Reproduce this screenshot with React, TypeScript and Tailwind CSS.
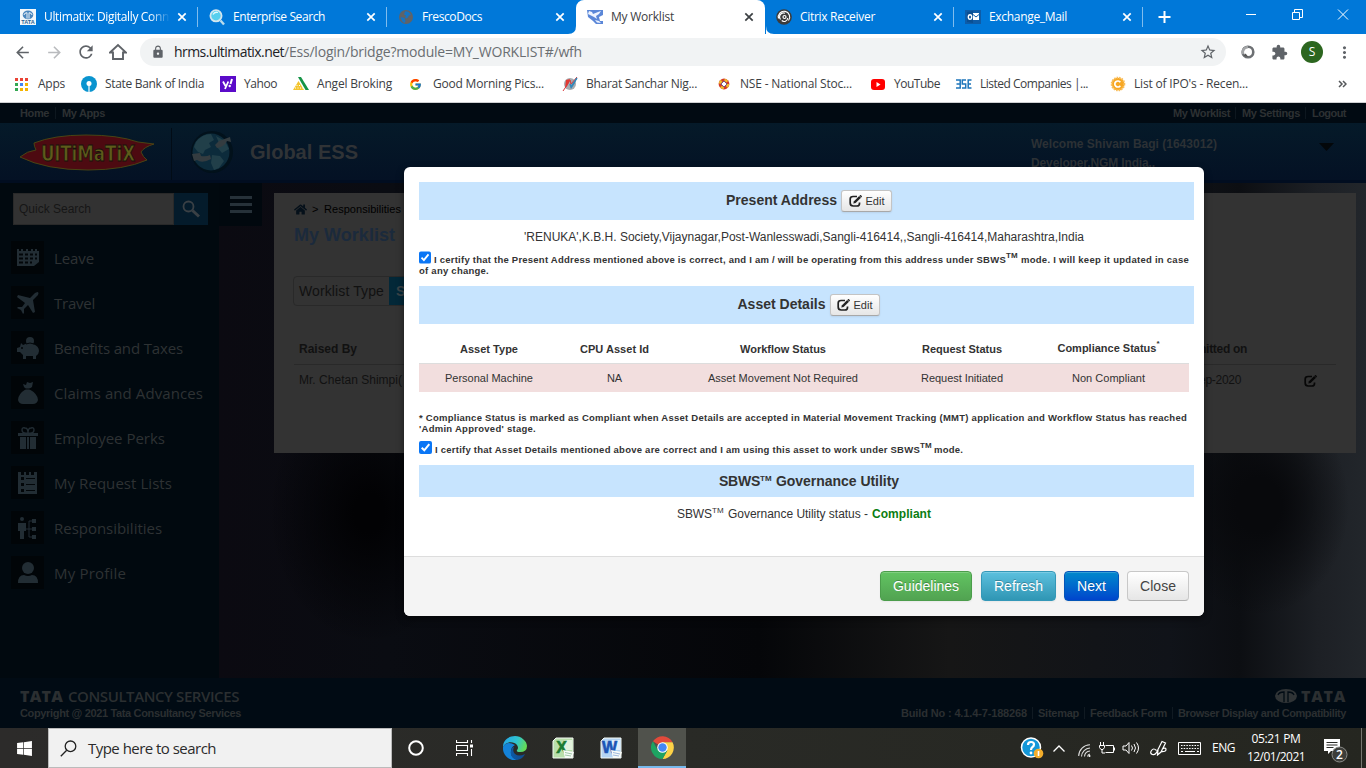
import { useLayoutEffect, useRef, useState, type ReactNode } from "react";
import { MdArrowBack, MdArrowForward, MdRefresh, MdLock, MdStarBorder, MdExtension, MdMoreVert } from "react-icons/md";
import { FcGoogle } from "react-icons/fc";
import { FaWindows, FaHome } from "react-icons/fa";

/* Text run tracked so that it fills the given width. */
function Txt({ w, children, className = "" }: { w: number; children: string; className?: string }) {
  const ref = useRef<HTMLSpanElement>(null);
  const [spacing, setSpacing] = useState(0);
  useLayoutEffect(() => {
    if (ref.current) {
      const natural = ref.current.getBoundingClientRect().width - spacing * children.length;
      setSpacing((w - natural) / children.length);
    }
  }, [w, children]);
  return (
    <span ref={ref} className={`inline-block shrink-0 whitespace-pre ${className}`} style={{ letterSpacing: spacing }}>
      {children}
    </span>
  );
}

const segoe = "font-['Open_Sans','Noto_Sans',sans-serif]";

/* ---------- favicons ---------- */
const TataIcon = () => (
  <svg width="16" height="16" viewBox="0 0 16 16">
    <rect width="16" height="16" fill="#f4f8fb" />
    <ellipse cx="8" cy="5.8" rx="5.3" ry="4.4" fill="#4a86bd" />
    <path d="M4 6q0-2 3-2.300v6M12 6q0-2-3-2.300v6" stroke="#fff" strokeWidth=".9" fill="none" />
    <text x="8" y="15" textAnchor="middle" fontSize="5.500" fontWeight="700" fill="#2a6295" className="font-['Liberation_Sans',sans-serif]">TATA</text>
  </svg>
);
const SearchFav = () => (
  <svg width="17" height="17" viewBox="0 0 17 17">
    <circle cx="7" cy="6.800" r="5.600" fill="#57cfee" stroke="#d3e6ee" strokeWidth="1.800" />
    <path d="M4 5.500q1.500-3 5-2" stroke="#dffbff" fill="none" strokeWidth="1.300" />
    <path d="M11.500 11.500l3.500 4" stroke="#b9dcec" strokeWidth="2.400" />
  </svg>
);
const GlobeFav = () => (
  <svg width="16" height="16" viewBox="0 0 16 16">
    <circle cx="8" cy="8" r="7" fill="#5f6368" />
    <path d="M7 2.500q3-1 6 3l-2 1-2 3-2-1 1-2-2-1zM2.500 8l4 1 1 3-1 2q-3-1-4-6z" fill="#1674c4" />
  </svg>
);
const WorklistFav = () => (
  <svg width="16" height="16" viewBox="0 0 16 16">
    <path d="M0 1h16v5l-4 2 1 4h3v3H9l-3-3-5-4z" fill="#5b87d8" />
    <path d="M2 2l3 1 1 2 5-2 3-1-2 3-3 2 1 3-3-2-2-1-4-2zM8 11l4 1 2 2-4-.5z" fill="#eef4ff" />
  </svg>
);
const CitrixFav = () => (
  <svg width="16" height="16" viewBox="0 0 16 16">
    <circle cx="8" cy="8" r="7.800" fill="#3b3b3b" />
    <circle cx="8.500" cy="8" r="1.500" fill="none" stroke="#fff" strokeWidth="1.200" />
    <path d="M2.500 9.500A5.700 5.700 0 1 1 12.500 11.500M4.500 10.500A4 4 0 0 1 9 4.200M11.700 9a3.600 3.600 0 0 1-6 2.500" fill="none" stroke="#fff" strokeWidth="1.100" />
  </svg>
);
const OutlookFav = () => (
  <svg width="16" height="16" viewBox="0 0 16 16">
    <path d="M0 1h16v14H0z" fill="#0d5ca8" />
    <path d="M8 4h6v7H8z" fill="#fff" />
    <path d="M8 5.500l3 2.500 3-2.500" stroke="#0d5ca8" fill="none" />
    <path d="M2 3l6-1v12l-6-1z" fill="#0a4f93" />
    <ellipse cx="5" cy="8" rx="1.700" ry="2.200" fill="none" stroke="#fff" strokeWidth="1.400" />
  </svg>
);

const Cross = ({ color = "#fff" }: { color?: string }) => (
  <svg width="10" height="10" viewBox="0 0 10 10">
    <path d="M1.300 1.300l7.400 7.400M8.700 1.300l-7.400 7.400" stroke={color} strokeWidth="1.700" />
  </svg>
);

function Tab({ icon, label, w, active, sep, fade }: { icon: ReactNode; label: string; w: number; active?: boolean; sep?: boolean; fade?: boolean }) {
  return (
    <div className={`relative flex h-[34px] w-[189px] shrink-0 items-center pl-[11px] ${active ? "rounded-t-lg bg-white text-[#3c4043]" : "text-white"}`}>
      {active && (
        <svg className="absolute -left-2 bottom-0" width="206" height="8" viewBox="0 0 206 8">
          <path d="M0 8q8 0 8-8v8zM206 8q-8 0-8-8v8z" fill="#fff" />
        </svg>
      )}
      <div className="flex h-4 w-[17px] items-center">{icon}</div>
      <div className={`ml-[7px] w-[126px] text-[12px] leading-4 ${fade ? "[mask-image:linear-gradient(90deg,#000_84%,transparent_100%)]" : ""}`}>
        <Txt w={w}>{label}</Txt>
      </div>
      <div className="ml-[7px] flex">
        <Cross color={active ? "#3c4043" : "#fff"} />
      </div>
      {sep && <div className="absolute right-0 top-[7px] h-5 w-px bg-[#80bced]" />}
    </div>
  );
}

/* ---------- browser chrome ---------- */
function Browser() {
  return (
    <div className={`${segoe} flex h-[103px] flex-col border-b border-[#cfd0d2] bg-white`}>
      <div className="flex h-[34px] bg-[#0078d9] pl-[9px]">
        <Tab icon={<TataIcon />} label="Ultimatix: Digitally Conn" w={125} sep fade />
        <Tab icon={<SearchFav />} label="Enterprise Search" w={92} sep />
        <Tab icon={<GlobeFav />} label="FrescoDocs" w={60} />
        <Tab icon={<WorklistFav />} label="My Worklist" w={63} active />
        <Tab icon={<CitrixFav />} label="Citrix Receiver" w={75} sep />
        <Tab icon={<OutlookFav />} label="Exchange_Mail" w={78} sep />
        <svg className="ml-[15px] mt-[11px]" width="13" height="12" viewBox="0 0 13 12">
          <path d="M6.500 0v12M.5 6h12" stroke="#fff" strokeWidth="2" />
        </svg>
        <svg className="ml-[75px] mt-[8px]" width="104" height="13" viewBox="0 0 104 13">
          <path d="M0 6.500h10M46.500 4.500h7v7h-7zM48.500 4.500v-3h8v8h-3M92 1.500l10 10M102 1.500l-10 10" stroke="#fff" fill="none" />
        </svg>
      </div>
      <div className="flex h-9 items-center pl-[13px] text-[#5f6368]">
        <MdArrowBack size={19} />
        <MdArrowForward size={19} className="ml-[13px] text-[#b9bbbe]" />
        <MdRefresh size={20} className="ml-[12px]" />
        <svg className="ml-[13px]" width="18" height="18" viewBox="0 0 18 18">
          <path d="M1 9.500L9 2l8 7.500h-3V16H4V9.500z" fill="none" stroke="#5f6368" strokeWidth="1.900" />
        </svg>
        <div className="ml-[13px] flex h-7 w-[1086px] items-center rounded-full bg-[#f1f3f4] pl-[11px] pr-[9px]">
          <MdLock size={14} />
          <div className="ml-[9px] text-[14px] leading-5">
            <Txt w={110} className="text-[#202124]">hrms.ultimatix.net</Txt>
            <Txt w={298} className="text-[#6a6e72]">/Ess/login/bridge?module=MY_WORKLIST#/wfh</Txt>
          </div>
          <MdStarBorder size={18} className="ml-auto" />
        </div>
        <svg className="ml-[15px]" width="14" height="14" viewBox="0 0 14 14">
          <circle cx="7" cy="7" r="5.300" fill="none" stroke="#6d7073" strokeWidth="2.600" />
          <path d="M2 9a5.300 5.300 0 0 1 5-7" stroke="#a3a5a7" strokeWidth="2.600" fill="none" />
          <path d="M4.500 8.500l3 3.500-5-1z" fill="#555" />
        </svg>
        <MdExtension size={17} className="ml-[16px]" />
        <div className="ml-[13px] flex size-[22px] items-center justify-center rounded-full bg-[#2c661f] text-[12px] text-white">S</div>
        <MdMoreVert size={19} className="ml-[12px]" />
      </div>
      <div className="flex h-8 items-start pt-[5px] pl-[15px] text-[12px] leading-[18px] text-[#3c4043]">
        <div className="flex h-[18px] w-[66px] items-center gap-[10px]">
          <svg width="13" height="13" viewBox="0 0 13 13">
            <path d="M0 0h3v3H0zM5 0h3v3H5zM10 0h3v3h-3z" fill="#ea4335" />
            <path d="M0 5h3v3H0z" fill="#34a853" /><path d="M5 5h3v3H5z" fill="#4285f4" />
            <path d="M10 5h3v3h-3zM5 10h3v3H5zM10 10h3v3h-3z" fill="#f5b400" /><path d="M0 10h3v3H0z" fill="#34a853" />
          </svg>
          <Txt w={27}>Apps</Txt>
        </div>
        <Bookmark box="w-[139px]" w={99} label="State Bank of India" icon={
          <svg width="16" height="16" viewBox="0 0 16 16"><circle cx="8" cy="8" r="8" fill="#0a94cf" /><circle cx="8" cy="7.500" r="2.500" fill="#fff" /><path d="M7.400 8h1.200v8H7.400z" fill="#fff" /></svg>} />
        <Bookmark box="w-[73px]" w={33} label="Yahoo" icon={
          <svg width="16" height="16" viewBox="0 0 16 16"><path d="M0 0h16v16H0z" fill="#5b0bc9" /><path d="M3 5.500l2.500 4.500M8.300 5.500L5 13" stroke="#fff" strokeWidth="1.800" /><path d="M12 3l-1.500 5" stroke="#fff" strokeWidth="2" /><circle cx="9.700" cy="10" r="1.200" fill="#fff" /></svg>} />
        <Bookmark box="w-[116px]" w={75} label="Angel Broking" icon={
          <svg width="16" height="16" viewBox="0 0 16 16"><path d="M0 14L5.500 5 11 14z" fill="#f4c52e" /><path d="M5 1h3l8 13h-3.500z" fill="#169447" /><path d="M2 12h8M3.500 9.500h5" stroke="#fff" strokeDasharray="1 1.500" /></svg>} />
        <Bookmark box="w-[153px]" w={111} label="Good Morning Pics..." icon={<FcGoogle size={13} />} />
        <Bookmark box="w-[154px]" w={111} label="Bharat Sanchar Nig..." icon={
          <svg width="17" height="16" viewBox="0 0 17 16"><circle cx="8" cy="8" r="6" fill="#a6abb0" /><path d="M3 12Q6 10 8 3L4 4z" fill="#e33a32" /><path d="M9 10L15 1l-2 6-4 6z" fill="#3487b8" /><path d="M1 15Q6 8 8 4l1 4 6-7" stroke="#d9393b" fill="none" strokeWidth="1" /><path d="M8 8l1 3 6-9" stroke="#3487b8" fill="none" strokeWidth="1.500" /></svg>} />
        <Bookmark box="w-[154px]" w={112} label="NSE - National Stoc..." icon={
          <svg width="16" height="16" viewBox="0 0 16 16"><circle cx="8" cy="8" r="5.400" fill="#d33a27" /><circle cx="8" cy="8" r="4" fill="none" stroke="#f0b92c" strokeWidth="2.600" strokeDasharray="3.200 3.080" /><path d="M8 5l3 3-3 3-3-3z" fill="#fff" stroke="#5a3d7e" strokeWidth=".8" /></svg>} />
        <Bookmark box="w-[86px]" w={46} label="YouTube" icon={
          <svg width="16" height="16" viewBox="0 0 16 16"><rect x="1" y="3" width="14" height="11" rx="3" fill="#f00" /><path d="M6.500 6l4 2.500-4 2.500z" fill="#fff" /></svg>} />
        <Bookmark box="w-[154px]" w={108} label="Listed Companies |..." icon={
          <svg width="16" height="16" viewBox="0 0 16 16"><path d="M0 4h4.200v8H0M.5 8h4M10 4H6.300v4h3.400v4H6M15.500 4h-3.300v8h3.300M12 8h3" fill="none" stroke="#1e76bb" strokeWidth="1.500" /></svg>} />
        <Bookmark box="w-[228px]" w={114} label="List of IPO's - Recen..." icon={
          <svg width="16" height="16" viewBox="0 0 16 16"><circle cx="8" cy="8" r="6.300" fill="#f7a723" stroke="#f9bd58" strokeWidth="2" strokeDasharray="1.500 1" /><path d="M10.300 6.300a3 3 0 1 0 0 3.400" fill="none" stroke="#fff" strokeWidth="1.700" /></svg>} />
        <svg className="mt-[5px]" width="9" height="8" viewBox="0 0 9 8"><path d="M1 1l3 3-3 3M5 1l3 3-3 3" fill="none" stroke="#55585b" strokeWidth="1.500" /></svg>
      </div>
    </div>
  );
}

function Bookmark({ box, w, label, icon }: { box: string; w: number; label: string; icon: ReactNode }) {
  return (
    <div className={`flex h-[18px] shrink-0 items-center ${box}`}>
      <div className="flex w-6 items-center">{icon}</div>
      <Txt w={w}>{label}</Txt>
    </div>
  );
}

/* ---------- dimmed page ---------- */
const g = "#222d34";
const menu: { label: string; w: number; icon: ReactNode }[] = [
  { label: "Leave", w: 40, icon: <svg width="22" height="18" viewBox="0 0 22 18"><path d="M0 0h2v2h2V0h2v2h3V0h2v2h3V0h2v2h2V0h2v2h2v11l-5 4H0z" fill={g} /><path d="M2 5.500h4M8 5.500h3M13 5.500h3M18 5.500h2M2 9.500h4M8 9.500h3M13 9.500h3M18 9.500h2M2 13.500h4M8 13.500h3M13 13.500h2" stroke="#020609" strokeWidth="2" /></svg> },
  { label: "Travel", w: 41, icon: <svg width="22" height="22" viewBox="0 0 22 22"><path d="M21 0q1 1 0 3l-5 5 2 12-2 1-5-8-4 4v4l-1 1-2-4-4-2 1-1h4l3-4-8-6 1-2 12 3 5-5q2-1 3-1z" fill={g} /></svg> },
  { label: "Benefits and Taxes", w: 129, icon: <svg width="22" height="22" viewBox="0 0 22 22"><circle cx="13" cy="4" r="4" fill={g} /><path d="M4 6l2 2q5-3 10-1 6 2 6 7 0 3-3 5v3h-3v-3H9v3H6v-4l-3-3H0v-4l3-1z" fill={g} /><path d="M9 7q4-2 8 0" stroke="#020609" fill="none" /><circle cx="5" cy="11" r="1" fill="#020609" /></svg> },
  { label: "Claims and Advances", w: 149, icon: <svg width="20" height="24" viewBox="0 0 20 24"><path d="M5 3l3 1 1-3 3 1 3-1-1 5-3 2q9 5 9 11-1 4-5 4H5q-4 0-5-4 0-6 8-11L6 6z" fill={g} /><path d="M7 8h6" stroke="#020609" /></svg> },
  { label: "Employee Perks", w: 111, icon: <svg width="20" height="22" viewBox="0 0 20 22"><path d="M10 6Q4 7 4 3q0-3 3-2 3 0 3 5Q10 1 13 1q3-1 3 2 0 4-6 3z" fill="none" stroke={g} strokeWidth="1.400" /><path d="M0 6h20v3H0zM2 10h6v12H2zM9 10h2v12H9zM12 10h6v12h-6z" fill={g} /></svg> },
  { label: "My Request Lists", w: 118, icon: <svg width="19" height="22" viewBox="0 0 19 22"><path d="M0 0h3v3h3V0h2v3h3V0h2v3h3V0h3v22H0z" fill={g} /><path d="M3 5h3v3H3zM3 11h3v3H3zM3 17h3v3H3zM8 6h9v1H8zM8 12h9v1H8zM8 18h9v1H8z" fill="#020609" /></svg> },
  { label: "Responsibilities", w: 108, icon: <svg width="19" height="22" viewBox="0 0 19 22"><circle cx="4" cy="2" r="2" fill={g} /><path d="M0 6h8v8H6v8H2v-8H0zM14 2h4v4h-4zM14 10h4v4h-4zM14 18h4v4h-4z" fill={g} /><path d="M14 4h-3v16h3M8 12h6" stroke={g} fill="none" /></svg> },
  { label: "My Profile", w: 72, icon: <svg width="20" height="21" viewBox="0 0 20 21"><circle cx="10" cy="6" r="6" fill={g} /><path d="M0 21q0-8 6-8 4 2 8 0 6 0 6 8z" fill={g} /></svg> },
];

const EditIcon = ({ color }: { color: string }) => (
  <svg width="13" height="12" viewBox="0 0 13 12">
    <path d="M8 1.500H4Q1.200 1.500 1.200 4v4q0 3 3 3H8q2.500 0 2.500-2.500V7.500" fill="none" stroke={color} strokeWidth="1.700" />
    <path d="M4.200 8.500L5 6.300 10.200 1 12 2.700 6.600 8z" fill={color} />
    <path d="M11 .3l1.700 1.600" stroke={color} strokeWidth="1.400" />
  </svg>
);

function Sidebar() {
  return (
    <div className="h-[495px] w-[219px] bg-[#01090f] pt-[10px]">
      <div className="flex h-8 pl-[13px]">
        <div className="flex w-[161px] items-center border border-[#292929] bg-[#323232] pl-[5px] text-[#161616]">
          <Txt w={72} className="text-[12px]">Quick Search</Txt>
        </div>
        <div className="flex w-[34px] items-center justify-center bg-[#041b2b]">
          <svg width="18" height="18" viewBox="0 0 18 18"><circle cx="6.500" cy="6.500" r="5" fill="none" stroke="#3a4045" strokeWidth="1.800" /><path d="M10.500 10.500l6.500 6" stroke="#3a4045" strokeWidth="3" /></svg>
        </div>
      </div>
      <div className="mt-4 flex flex-col gap-3 pl-[11px]">
        {menu.map((m) => (
          <div key={m.label} className="flex h-[33px] items-center">
            <div className="flex size-[33px] items-center justify-center bg-[#010508]">{m.icon}</div>
            <div className={`ml-[10px] text-[15px] leading-5 text-[#2e3234] ${segoe}`}><Txt w={m.w}>{m.label}</Txt></div>
          </div>
        ))}
      </div>
    </div>
  );
}

function Page() {
  return (
    <div className="flex h-[625px] flex-col bg-[#07090d] font-['Liberation_Sans',Arial,sans-serif]">
      <div className="flex h-5 items-center bg-[#010a12] pr-5 pl-5 text-[11px] font-bold text-[#2d3133]">
        <Txt w={29}>Home</Txt>
        <div className="mx-[6px] h-3 w-px bg-[#0d171f]" />
        <Txt w={43}>My Apps</Txt>
        <Txt w={57} className="ml-auto">My Worklist</Txt>
        <div className="mr-[6px] ml-[5px] h-3 w-px bg-[#0d171f]" />
        <Txt w={58}>My Settings</Txt>
        <div className="mr-[6px] ml-[5px] h-3 w-px bg-[#0d171f]" />
        <Txt w={34}>Logout</Txt>
      </div>
      <div className="flex h-[60px] border-b-[3px] border-[#010d20] bg-linear-to-b from-[#051a29] to-[#041124]">
        <svg className="mt-[11px] ml-[18px]" width="138" height="38" viewBox="0 0 138 38">
          <path d="M2 23Q9 17 18 16q-2-4-2-7Q36 1 68 1q32 0 52 7l16 2q-10 3-13 8 2 5 6 8Q106 36 70 36 28 36 2 23z" fill="#4d0a11" stroke="#494414" strokeWidth="1" />
          <text x="70" y="27" textAnchor="middle" textLength="94" lengthAdjust="spacingAndGlyphs" fontSize="21" fontWeight="700" fill="#5e5b1a" stroke="#17120c" strokeWidth=".8" className="font-['DejaVu_Sans',sans-serif]">UlTiMaTiX</text>
        </svg>
        <div className="mt-[5px] ml-[15px] w-px bg-[#020c16]" />
        <svg className="mt-[8px] ml-[17px]" width="46" height="44" viewBox="0 0 46 44">
          <circle cx="23" cy="21" r="21" fill="#02111b" />
          <circle cx="22" cy="21" r="18.500" fill="#0c2b3b" />
          <path d="M7 11Q13 3 22 3l3 6-5 3 2 4-6 3-2 4-5-2-4-5zM23 24l8 1 4 5-5 7-5 2-3-7zM27 5l9 5 4 8-7 4-5-6 2-4z" fill="#213f49" />
          <path d="M30 10l11-4 1 5-4-1q-3 6-10 7l-2-3zM3 23l8-1 1 3q5 1 9-1l1 4q-9 5-14 1l-3 1z" fill="#343c40" />
        </svg>
        <div className="mt-[17px] ml-[15px] text-[20px] leading-6 font-bold text-[#303336]"><Txt w={108}>Global ESS</Txt></div>
        <div className="mt-[12px] ml-auto w-[288px] text-[12px] leading-[19px] font-bold text-[#2c3135]">
          <Txt w={186}>Welcome Shivam Bagi (1643012)</Txt>
          <Txt w={124}>Developer.NGM India..</Txt>
        </div>
        <svg className="mt-[20px] mr-[32px]" width="15" height="8" viewBox="0 0 15 8"><path d="M0 0h15L7.500 8z" fill="#03070a" /></svg>
      </div>
      <div className="flex h-[495px]">
        <Sidebar />
        <div className="flex flex-1 bg-[radial-gradient(ellipse_90px_110px_at_1040px_322px,#08090c_0%,#08090c_25%,transparent_100%),radial-gradient(ellipse_100px_130px_at_150px_330px,#020204_15%,transparent_100%),linear-gradient(90deg,#0b0a11_0px,#0a0c12_170px,#050609_540px,#161616_730px,#101319_950px,#0c0e12_1020px,#1d2025_1100px,#22262b_1147px)]">
          <div className="flex h-[43px] w-[43px] shrink-0 justify-center bg-[#01080e] pt-[13px]">
            <div className="flex w-[22px] flex-col gap-1">
              <div className="h-[3px] bg-[#263139]" /><div className="h-[3px] bg-[#263139]" /><div className="h-[3px] bg-[#263139]" />
            </div>
          </div>
          <div className="mt-[10px] ml-3 h-[260px] w-[1082px] bg-[#333] pr-5 pl-5 text-[#111]">
            <div className="flex h-[33px] items-center text-[11px] text-black">
              <FaHome size={13} color="#05101a" />
              <Txt w={7} className="ml-[5px]">&gt;</Txt>
              <Txt w={77} className="ml-[5px]">Responsibilities</Txt>
            </div>
            <div className="text-[18px] leading-[18px] font-bold text-[#1b2a3c]"><Txt w={101}>My Worklist</Txt></div>
            <div className="mt-8 -ml-px flex h-[30px] w-[180px] overflow-hidden rounded border border-[#292929] text-[14px] leading-[28px]">
              <Txt w={85} className="mr-[5px] ml-[5px]">Worklist Type</Txt>
              <div className="flex-1 bg-[#032838] pl-[7px] font-bold text-[#3a4347]">Self</div>
            </div>
            <div className="mt-7 flex h-[31px] items-center border-b border-[#292929] pl-[5px] text-[12px] font-bold">
              <Txt w={58}>Raised By</Txt>
              <Txt w={73} className="mr-[89px] ml-auto">Submitted on</Txt>
            </div>
            <div className="flex h-[29px] items-center pl-[5px] text-[12px]">
              <Txt w={103}>Mr. Chetan Shimpi(</Txt>
              <Txt w={66} className="mr-[63px] ml-auto">10-Sep-2020</Txt>
              <div className="mt-[2px] mr-[19px]"><EditIcon color="#070707" /></div>
            </div>
          </div>
        </div>
      </div>
      <div className="flex h-[50px] flex-col bg-[#010b14] px-5 pt-[9px] text-[11px] font-bold text-[#2b2f31]">
        <div className={`flex h-[18px] items-center text-[15px] leading-[18px] ${segoe}`}>
          <Txt w={43} className="text-[16px] font-black">TATA</Txt>
          <Txt w={171} className="ml-[5px] font-semibold">CONSULTANCY SERVICES</Txt>
          <svg className="mr-[4px] ml-auto" width="22" height="14" viewBox="0 0 22 14"><ellipse cx="11" cy="7" rx="11" ry="7" fill="#303436" /><path d="M3 6q1-3 6-3v10M19 6q-1-3-6-3v10" fill="none" stroke="#010b14" strokeWidth="1.300" /></svg>
          <Txt w={45} className="text-[16px] font-black">TATA</Txt>
        </div>
        <div className="flex h-4 items-center">
          <Txt w={221}>Copyright @ 2021 Tata Consultancy Services</Txt>
          <Txt w={126} className="ml-auto">Build No : 4.1.4-7-188268</Txt>
          <div className="mx-[5px] h-3 w-px bg-[#101a22]" />
          <Txt w={41}>Sitemap</Txt>
          <div className="mx-[5px] h-3 w-px bg-[#101a22]" />
          <Txt w={77}>Feedback Form</Txt>
          <div className="mx-[5px] h-3 w-px bg-[#101a22]" />
          <Txt w={168}>Browser Display and Compatibility</Txt>
        </div>
      </div>
    </div>
  );
}

/* ---------- dialog ---------- */
const EditButton = ({ box }: { box: string }) => (
  <div className={`mt-[2px] flex h-[22px] items-center justify-center gap-1 rounded-[3px] border border-[#c4c4c4] border-b-[#a8a8a8] bg-linear-to-b from-white to-[#e6e6e6] text-[11px] font-normal text-[#333] shadow-[0_1px_2px_rgba(0,0,0,0.08)] ${box}`}>
    <EditIcon color="#222" />
    <Txt w={19}>Edit</Txt>
  </div>
);
const Check = () => (
  <svg className="inline-block" width="13" height="13" viewBox="0 0 13 13"><rect width="13" height="13" rx="2" fill="#0a76f5" /><path d="M2.700 6.700l2.600 2.600 5-6.200" fill="none" stroke="#fff" strokeWidth="2" /></svg>
);
const bandCls = "flex w-[775px] items-center justify-center bg-[#c7e4fe] text-[14px] font-bold";
const btnCls = "flex h-[30px] items-center justify-center rounded border text-[14px] text-white [text-shadow:0_-1px_0_rgba(0,0,0,0.25)] shadow-[inset_0_1px_0_rgba(255,255,255,0.2),0_1px_2px_rgba(0,0,0,0.05)]";

function Dialog() {
  return (
    <div className="absolute top-[167px] left-[404px] flex h-[449px] w-[800px] flex-col overflow-hidden rounded-md bg-white font-['Liberation_Sans',Arial,sans-serif] text-[#333] shadow-[0_3px_7px_rgba(0,0,0,0.5)]">
      <div className="flex h-[389px] flex-col px-[15px] pt-[15px]">
        <div className={`${bandCls} h-[38px] shrink-0 gap-[4px] pb-[2px] pl-[5px]`}><Txt w={111}>Present Address</Txt><EditButton box="w-[51px]" /></div>
        <div className="mt-[9px] flex h-4 w-[770px] justify-center text-[12px] leading-4">
          <Txt w={560}>'RENUKA',K.B.H. Society,Vijaynagar,Post-Wanlesswadi,Sangli-416414,,Sangli-416414,Maharashtra,India</Txt>
        </div>
        <div className="mt-[6px] flex h-[14px] items-start text-[9.5px] leading-[17px] font-bold">
          <Check />
          <Txt w={572} className="ml-[3px]">I certify that the Present Address mentioned above is correct, and I am / will be operating from this address under SBWS</Txt>
          <Txt w={12} className="-mt-[4px] text-[8px]">TM</Txt>
          <Txt w={168} className="ml-[3px]">mode. I will keep it updated in case</Txt>
        </div>
        <div className="text-[9.5px] leading-[11px] font-bold"><Txt w={70}>of any change.</Txt></div>
        <div className={`${bandCls} mt-[10px] h-[38px] shrink-0 gap-[4px] pb-[2px] pl-[4px]`}><Txt w={88}>Asset Details</Txt><EditButton box="w-[50px]" /></div>
        <div className="mt-[10px] grid h-[29px] w-[770px] grid-cols-[140px_111px_226px_132px_161px] items-center text-center text-[11px] leading-4 font-bold">
          <div><Txt w={58}>Asset Type</Txt></div>
          <div><Txt w={69}>CPU Asset Id</Txt></div>
          <div><Txt w={86}>Workflow Status</Txt></div>
          <div><Txt w={80}>Request Status</Txt></div>
          <div className="flex justify-center"><Txt w={99} className="-mt-px">Compliance Status</Txt><span className="-mt-[5px] text-[8px]">*</span></div>
        </div>
        <div className="grid h-[29px] w-[770px] grid-cols-[140px_111px_226px_132px_161px] items-center border-t border-[#ddd] bg-[#f2dede] text-center text-[11px] leading-4">
          <div><Txt w={88}>Personal Machine</Txt></div>
          <div><Txt w={15}>NA</Txt></div>
          <div><Txt w={150}>Asset Movement Not Required</Txt></div>
          <div><Txt w={82}>Request Initiated</Txt></div>
          <div><Txt w={73}>Non Compliant</Txt></div>
        </div>
        <div className="mt-5 flex h-[22px] flex-col items-start text-[9.5px] leading-[11px] font-bold">
          <Txt w={768}>* Compliance Status is marked as Compliant when Asset Details are accepted in Material Movement Tracking (MMT) application and Workflow Status has reached</Txt>
          <Txt w={117}>'Admin Approved' stage.</Txt>
        </div>
        <div className="mt-[7px] flex h-[14px] items-start text-[9.5px] leading-[17px] font-bold">
          <Check />
          <Txt w={485} className="ml-[3px]">I certify that Asset Details mentioned above are correct and I am using this asset to work under SBWS</Txt>
          <Txt w={12} className="-mt-[4px] text-[8px]">TM</Txt>
          <Txt w={29} className="ml-[2px]">mode.</Txt>
        </div>
        <div className={`${bandCls} mt-[10px] h-8 shrink-0 pl-[5px]`}>
          <Txt w={41}>SBWS</Txt><Txt w={12} className="-mt-[5px] text-[8px]">TM</Txt><Txt w={123} className="ml-[4px]">Governance Utility</Txt>
        </div>
        <div className="mt-[9px] flex h-4 w-[770px] justify-center text-[12px] leading-4">
          <Txt w={35}>SBWS</Txt><Txt w={12} className="-mt-[3px] text-[8px]">TM</Txt><Txt w={140} className="mr-[4px] ml-[4px]">Governance Utility status -</Txt>
          <Txt w={59} className="font-bold text-[#0a7d12]">Compliant</Txt>
        </div>
      </div>
      <div className="flex h-[60px] justify-end border-t border-[#ddd] bg-[#f4f4f4] pt-[14px] pr-[15px]">
        <div className={`${btnCls} w-[92px] border-[#4b9d4b] bg-linear-to-b from-[#62c462] to-[#51a351]`}><Txt w={66}>Guidelines</Txt></div>
        <div className={`${btnCls} ml-[9px] w-[75px] border-[#3498b8] bg-linear-to-b from-[#5bc0de] to-[#2f96b4]`}><Txt w={49}>Refresh</Txt></div>
        <div className={`${btnCls} ml-2 w-[55px] border-[#0455b8] bg-linear-to-b from-[#0088cc] to-[#0044cc]`}><Txt w={29}>Next</Txt></div>
        <div className="ml-2 flex h-[30px] w-[62px] items-center justify-center rounded border border-[#c8c8c8] border-b-[#b0b0b0] bg-linear-to-b from-white to-[#e6e6e6] text-[14px] text-[#444]"><Txt w={36}>Close</Txt></div>
      </div>
    </div>
  );
}

/* ---------- taskbar ---------- */
function Office({ letter, dark, light }: { letter: string; dark: string; light: string }) {
  return (
    <svg width="23" height="22" viewBox="0 0 23 22">
      <path d="M1 4l3-3h17v20H1z" fill={light} stroke="#f5faf5" />
      <path d="M12 3h8v10h-8z" fill="#fff" opacity=".6" />
      <text x="9.500" y="16" textAnchor="middle" fontSize="16" fontWeight="700" fill={dark} stroke={dark} strokeWidth=".6" className="font-['Liberation_Sans',sans-serif]">{letter}</text>
      <path d="M11 13l11 2-2 6h-7z" fill="#f7fbf7" />
      <path d="M13 15.500l7 1.500M13 18l6 1" stroke={dark} strokeWidth=".8" opacity=".5" />
    </svg>
  );
}

function Taskbar() {
  return (
    <div className={`flex h-10 items-center bg-linear-to-r from-[#2c2b2a] via-[#292a26] to-[#252620] text-white ${segoe}`}>
      <div className="flex w-12 justify-center"><FaWindows size={17} /></div>
      <div className="flex h-10 w-[344px] items-center border border-[#bbb] bg-[#f1f1f1] pl-[11px] text-[#2b2b2b]">
        <svg width="17" height="17" viewBox="0 0 17 17"><circle cx="10.500" cy="6.300" r="5.300" fill="none" stroke="#222" strokeWidth="1.300" /><path d="M6.700 10.300L.8 16.200" stroke="#222" strokeWidth="1.300" /></svg>
        <Txt w={128} className="ml-[11px] text-[15px]">Type here to search</Txt>
      </div>
      <div className="flex w-12 justify-center"><svg width="16" height="16" viewBox="0 0 16 16"><circle cx="8" cy="8" r="6.800" fill="none" stroke="#fff" strokeWidth="2" /></svg></div>
      <div className="flex w-12 justify-center">
        <svg width="17" height="16" viewBox="0 0 17 16"><path d="M.5 0v2.500h11V0M.5 5.500h11v5H.5zM.5 16v-2.500h11V16M15.500 0v3M15.500 9v7" fill="none" stroke="#fff" strokeWidth="1.100" /><path d="M14 4.500h3v3h-3z" fill="#fff" /></svg>
      </div>
      <div className="flex w-[54px] justify-center">
        <svg width="24" height="24" viewBox="0 0 24 24">
          <defs>
            <linearGradient id="edgeTop" x1="0" x2="1" y1=".2" y2=".5"><stop stopColor="#25a5e8" /><stop offset=".55" stopColor="#2fc4d0" /><stop offset="1" stopColor="#64dc55" /></linearGradient>
            <linearGradient id="edgeLow"><stop stopColor="#0c59a4" /><stop offset="1" stopColor="#114a8b" /></linearGradient>
          </defs>
          <path d="M0 11a12 12 0 0 0 14 13q-7-3-6-9 0-4 4-6Q4 4 0 11z" fill="#1482d8" />
          <path d="M0 11C0 4 6 0 12 0s12 5 12 10q0 6-7 6-4 0-3-2 2-2 0-5C11 5 3 5 0 11z" fill="url(#edgeTop)" />
          <path d="M9 12q-4 9 5 12 6-1 8-6-6 3-10 0-3-3-1-7-1 0-2 1z" fill="url(#edgeLow)" />
        </svg>
      </div>
      <div className="flex w-[42px] justify-center"><Office letter="X" dark="#1c7b32" light="#b9dfab" /></div>
      <div className="flex w-[54px] justify-center"><Office letter="W" dark="#1c55b5" light="#b4d4f3" /></div>
      <div className="flex h-10 w-12 items-center justify-center border-b-2 border-[#76b9ed] bg-[#50524c]">
        <svg width="23" height="23" viewBox="0 0 24 24">
          <path d="M12 12L2 5.500A12 12 0 0 1 22.500 6.500H12z" fill="#e24a3b" />
          <path d="M12 12V6.500h10.500A12 12 0 0 1 12 24l5-9z" fill="#fdd247" />
          <path d="M12 12l5 3-5 9A12 12 0 0 1 2 5.500l5 9z" fill="#1ea362" />
          <circle cx="12" cy="12" r="5.500" fill="#fff" /><circle cx="12" cy="12" r="4.400" fill="#4587f3" />
        </svg>
      </div>
      <div className="ml-[334px] flex flex-1 items-center">
        <svg width="24" height="22" viewBox="0 0 24 22"><circle cx="11" cy="10.500" r="9.500" fill="#1497d8" stroke="#fff" strokeWidth="1.500" /><path d="M8 8q0-3 3-3t3 2.500q0 1.500-1.500 2.500-1.500 1-1.500 3" fill="none" stroke="#fff" strokeWidth="2.200" /><circle cx="11" cy="16" r="1.400" fill="#fff" /><circle cx="18.500" cy="16.500" r="4.800" fill="#f3ad2b" /><path d="M18.500 14v5" stroke="#fff" strokeWidth="1.600" /></svg>
        <svg className="ml-[9px]" width="12" height="7" viewBox="0 0 12 7"><path d="M.5 6.500L6 1l5.500 5.500" fill="none" stroke="#fff" strokeWidth="1.300" /></svg>
        <svg className="mt-1 ml-[13px]" width="13" height="13" viewBox="0 0 13 13"><path d="M.7 12A11.500 11.500 0 0 1 12 .7M3.500 12.500A9 9 0 0 1 12 4M6.500 12.500A6 6 0 0 1 12 7M9.500 12.500a3 3 0 0 1 2.500-2.500" fill="none" stroke="#ddd" strokeWidth="1.100" /><circle cx="11.500" cy="12" r="1" fill="#fff" /></svg>
        <svg className="ml-[8px]" width="16" height="14" viewBox="0 0 16 14"><path d="M6.500 4.500h8v7h-8M15.500 6.500v3M1.500 1v3M4.500 1v3M.5 4.500h5v2l-1.500 2H2L.5 6.500zM3 8v4h3" fill="none" stroke="#fff" /></svg>
        <svg className="ml-[7px]" width="17" height="14" viewBox="0 0 17 14"><path d="M1 5h3l3-3.500v11L4 9H1zM9.500 4.500q2 2.500 0 5M12 3q3 4 0 8M14.500 1.500q4 5.500 0 11" fill="none" stroke="#fff" /></svg>
        <svg className="ml-[11px]" width="17" height="16" viewBox="0 0 17 16"><path d="M6.500 10.500q-3-3-5 0-2 3 1 4t5-4l4.500-9 3.500 1.500-4.500 9-3.500 3 .5-5M12 9q4-2 4 .5t-5 2" fill="none" stroke="#fff" strokeWidth="1.200" /></svg>
        <svg className="ml-[11px]" width="23" height="13" viewBox="0 0 23 13"><path d="M.5.5h22v12H.5z" fill="none" stroke="#fff" /><path d="M3 3.500h18M3 6.500h18" stroke="#fff" strokeDasharray="1.500 1.200" /><path d="M3 9.500h2M7 9.500h10M19 9.500h2" stroke="#fff" /></svg>
        <Txt w={23} className="ml-[11px] text-[12px]">ENG</Txt>
        <div className="ml-[12px] flex w-[58px] flex-col items-center text-[12px] leading-[18px]"><Txt w={49}>05:21 PM</Txt><Txt w={58}>12/01/2021</Txt></div>
        <svg className="mt-[6px] ml-[18px]" width="26" height="26" viewBox="0 0 26 26"><path d="M1 1h16v12H8l-3 3v-3H1z" fill="#fff" /><path d="M3.500 4.500h11M3.500 7h11M3.500 9.500h7" stroke="#2a2b27" /><circle cx="16.500" cy="16.500" r="7.500" fill="#3d3e3a" stroke="#8b8c88" /><text x="16.500" y="20.700" textAnchor="middle" fontSize="12" fontWeight="600" fill="#fff">2</text></svg>
      </div>
      <div className="mr-[4px] h-10 w-px bg-[#767770]" />
    </div>
  );
}

export default function App() {
  return (
    <div className="relative h-[768px] w-[1366px] overflow-hidden">
      <Browser />
      <Page />
      <Taskbar />
      <Dialog />
    </div>
  );
}
